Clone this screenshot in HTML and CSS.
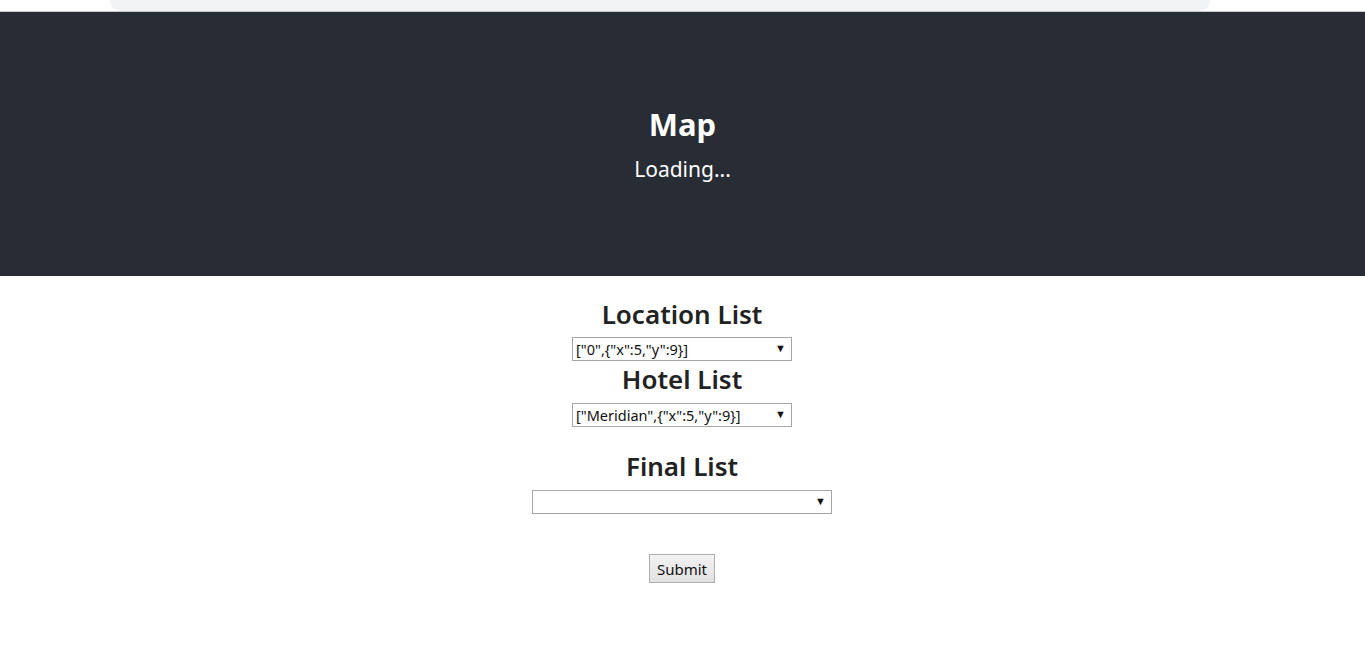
FILE: index.html
```html
<!DOCTYPE html>
<html>
<head>
<meta charset="utf-8">
<link rel="stylesheet" href="styles.css">
</head>
<body>
<div class="chrome"><div class="addr"></div></div>
<header class="app-header">
  <h1 class="title">Map</h1>
  <p class="loading">Loading...</p>
</header>
<main class="lists">
  <h2 class="list-title first">Location List</h2>
  <div class="sel sel-sm"><select><option>["0",{"x":5,"y":9}]</option></select><span class="arrow">▼</span></div>
  <h2 class="list-title hotel">Hotel List</h2>
  <div class="sel sel-sm"><select><option>["Meridian",{"x":5,"y":9}]</option></select><span class="arrow">▼</span></div>
  <h2 class="list-title final">Final List</h2>
  <div class="sel sel-lg"><select><option></option></select><span class="arrow">▼</span></div>
  <button class="submit">Submit</button>
</main>
</body>
</html>
```
FILE: styles.css
```css
html, body {
  margin: 0;
  padding: 0;
  background: #fff;
  font-family: "Noto Sans", "Open Sans", sans-serif;
  color: #222;
}
.chrome {
  height: 11px;
  background: #fff;
  border-bottom: 1px solid #c8c8c8;
  display: flex;
}
.addr {
  margin-left: 110px;
  width: 1100px;
  background: #f1f3f4;
  border-radius: 0 0 10px 10px;
}
.app-header {
  height: 264px;
  background: #282c34;
  color: #fff;
  display: flex;
  flex-direction: column;
  align-items: center;
  justify-content: center;
}
.title {
  margin: 0 0 2px;
  font-size: 31px;
  font-weight: 700;
  line-height: 40px;
}
.loading {
  margin: 8px 0 0;
  font-size: 21px;
  line-height: 30px;
}
.lists {
  display: flex;
  flex-direction: column;
  align-items: center;
  padding-right: 1px;
}
.list-title {
  margin: 0 0 6px;
  font-size: 26px;
  font-weight: 600;
  line-height: 34px;
  color: #222;
}
.list-title.first { margin-top: 21px; }
.list-title.hotel { margin-top: 1px; margin-bottom: 7px; }
.list-title.final { margin-top: 22px; margin-bottom: 7px; }
.sel {
  position: relative;
  height: 24px;
}
.sel-sm { width: 220px; }
.sel-lg { width: 300px; }
.sel select {
  -webkit-appearance: none;
  appearance: none;
  box-sizing: border-box;
  width: 100%;
  height: 24px;
  margin: 0;
  border: 1px solid #a6a6a6;
  border-radius: 0;
  background: #fff;
  font-family: inherit;
  font-size: 14.5px;
  color: #111;
  padding: 0 16px 0 3px;
}
.arrow {
  position: absolute;
  right: 6px;
  top: 5px;
  font-size: 11px;
  line-height: 12px;
  color: #111;
  pointer-events: none;
}
.submit {
  margin-top: 40px;
  width: 66px;
  height: 29px;
  box-sizing: border-box;
  border: 1px solid #adadad;
  border-radius: 0;
  background: linear-gradient(#f2f2f2, #e1e1e1);
  font-family: inherit;
  font-size: 15px;
  color: #111;
  padding: 0;
}
```
